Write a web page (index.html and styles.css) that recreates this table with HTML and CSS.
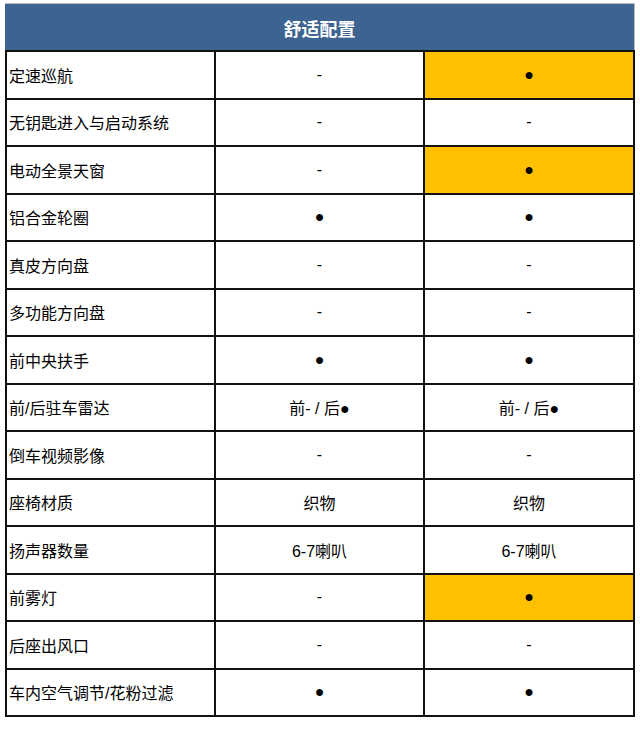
FILE: index.html
```html
<!DOCTYPE html>
<html>
<head>
<meta charset="utf-8">
<link rel="stylesheet" href="styles.css">
</head>
<body>
<div class="sheet">
  <div class="head">舒适配置</div>
  <div class="grid">
    <div class="c name">定速巡航</div><div class="c">-</div><div class="c hl">●</div>
    <div class="c name">无钥匙进入与启动系统</div><div class="c">-</div><div class="c">-</div>
    <div class="c name">电动全景天窗</div><div class="c">-</div><div class="c hl">●</div>
    <div class="c name">铝合金轮圈</div><div class="c">●</div><div class="c">●</div>
    <div class="c name">真皮方向盘</div><div class="c">-</div><div class="c">-</div>
    <div class="c name">多功能方向盘</div><div class="c">-</div><div class="c">-</div>
    <div class="c name">前中央扶手</div><div class="c">●</div><div class="c">●</div>
    <div class="c name">前/后驻车雷达</div><div class="c">前- / 后●</div><div class="c">前- / 后●</div>
    <div class="c name">倒车视频影像</div><div class="c">-</div><div class="c">-</div>
    <div class="c name">座椅材质</div><div class="c">织物</div><div class="c">织物</div>
    <div class="c name">扬声器数量</div><div class="c">6-7喇叭</div><div class="c">6-7喇叭</div>
    <div class="c name">前雾灯</div><div class="c">-</div><div class="c hl">●</div>
    <div class="c name">后座出风口</div><div class="c">-</div><div class="c">-</div>
    <div class="c name">车内空气调节/花粉过滤</div><div class="c">●</div><div class="c">●</div>
  </div>
</div>
</body>
</html>
```
FILE: styles.css
```css
html, body {
  margin: 0;
  background: #fff;
}
body {
  padding: 3px 0 0 5px;
  font-family: "Liberation Sans", "Noto Sans CJK SC", sans-serif;
  font-size: 16px;
  color: #000;
}
.sheet {
  width: 630px;
}
.head {
  width: 630px;
  height: 48px;
  box-sizing: border-box;
  background: #3d6390;
  border-top: 1px solid #bcbcbc;
  border-right: 1px solid #bcbcbc;
  color: #fff;
  font-weight: bold;
  font-size: 18px;
  display: flex;
  align-items: center;
  justify-content: center;
}
.grid {
  display: grid;
  grid-template-columns: 207px 207px 208px;
  grid-auto-rows: 45.5px;
  gap: 2px;
  background: #111;
  padding: 0 2px 2px 2px;
  width: 630px;
  box-sizing: border-box;
  border-top: 2px solid #111;
  margin-top: -1px;
}
.c {
  background: #fff;
  display: flex;
  align-items: center;
  justify-content: center;
}
.c.name {
  justify-content: flex-start;
  padding-left: 2px;
}
.c.hl {
  background: #ffc000;
}
```
